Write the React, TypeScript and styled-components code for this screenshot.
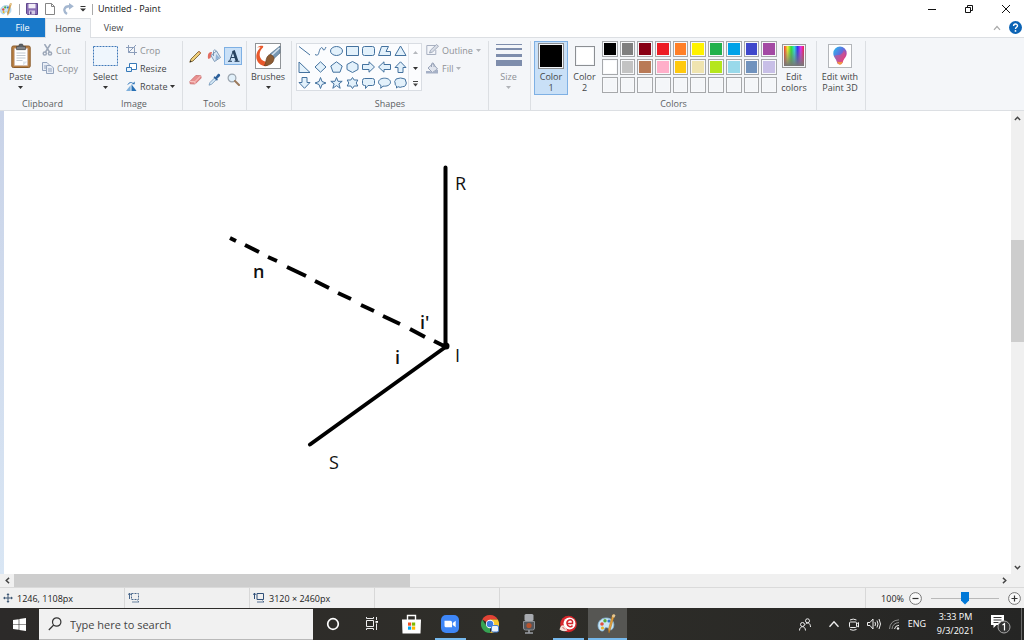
import React from "react";
import styled, { createGlobalStyle, css } from "styled-components";

const Global = createGlobalStyle`
  *, *::before, *::after { box-sizing: border-box; }
  body { margin: 0; background: #fff; }
  body, button, input { font-family: "Open Sans", "Liberation Sans", sans-serif; }
  button { padding: 0; border: 0; background: none; color: inherit; }
  svg { display: block; flex: none; }
`;

const ink = "#444648";
const muted = "#8d9095";
const line = "#dcdfe3";

const Desktop = styled.div`
  display: flex;
  flex-direction: column;
  min-height: 100vh;
  font-size: 9px;
  color: ${ink};
`;

/* Title bar */
const TitleBar = styled.header`
  display: flex;
  align-items: center;
  height: 18px;
  color: #111;
`;
const QuickAccess = styled.div`
  display: flex;
  align-items: center;
  gap: 6px;
`;
const IconButton = styled.button<{ $width?: number }>`
  display: flex;
  align-items: center;
  justify-content: center;
  width: ${(p) => p.$width ?? 12}px;
  height: 16px;
`;
const Divider = styled.span`
  width: 1px;
  height: 11px;
  background: #a9a9a9;
`;
const Title = styled.h1`
  margin: 0 0 0 5px;
  font-size: 9px;
  font-weight: 400;
  line-height: 18px;
`;
const WindowButtons = styled.div`
  display: flex;
  margin-left: auto;
`;
const WindowButton = styled.button`
  display: flex;
  align-items: center;
  justify-content: center;
  width: 37px;
  height: 17px;
`;

/* Tabs */
const TabRow = styled.nav`
  display: flex;
  align-items: stretch;
  height: 20px;
  border-bottom: 1px solid ${line};
`;
const Tab = styled.button<{ $kind?: "file" | "active" }>`
  width: 45px;
  font-size: 9px;
  ${(p) => p.$kind === "file" && css`
    background: #1979ca;
    color: #fff;
  `}
  ${(p) => p.$kind === "active" && css`
    height: 20px;
    width: 46px;
    background: #f4f6f9;
    border: 1px solid ${line};
    border-bottom: 0;
  `}
`;
const TabTools = styled.div`
  display: flex;
  align-items: center;
  gap: 6px;
  margin-left: auto;
  padding-right: 3px;
`;

/* Ribbon */
const Ribbon = styled.section`
  display: flex;
  padding-top: 3px;
  background: #f4f6f9;
  border-bottom: 1px solid ${line};
`;
const GroupBox = styled.div<{ $width: number }>`
  display: flex;
  flex-direction: column;
  gap: 3px;
  flex: none;
  width: ${(p) => p.$width}px;
  border-right: 1px solid ${line};
`;
const GroupBody = styled.div<{ $inset?: number }>`
  display: flex;
  height: 54px;
  padding-left: ${(p) => p.$inset ?? 0}px;
`;
const GroupName = styled.div`
  height: 12px;
  line-height: 12px;
  text-align: center;
  color: #5c5f63;
`;
const BigButton = styled.button<{ $width: number; $on?: boolean; $off?: boolean }>`
  display: flex;
  flex-direction: column;
  align-items: center;
  flex: none;
  width: ${(p) => p.$width}px;
  height: 54px;
  padding-top: 2px;
  font-size: 9px;
  line-height: 11px;
  color: ${(p) => (p.$off ? muted : ink)};
  ${(p) => p.$on && css`
    background: #c9e0f7;
    outline: 1px solid #7eb0e4;
    outline-offset: -1px;
  `}
`;
const BigIcon = styled.span`
  display: flex;
  align-items: center;
  justify-content: center;
  height: 26px;
  margin-bottom: 2px;
`;
const ArrowSlot = styled.span`
  display: flex;
  align-items: center;
  height: 10px;
`;
const Stack = styled.div`
  display: flex;
  flex-direction: column;
  margin-left: 1px;
`;
const SmallButton = styled.button<{ $off?: boolean }>`
  display: flex;
  align-items: center;
  gap: 3px;
  height: 18px;
  font-size: 9px;
  color: ${(p) => (p.$off ? muted : ink)};
`;
const ToolGrid = styled.div`
  display: grid;
  grid-template-columns: repeat(3, 18px);
  grid-auto-rows: 18px;
  gap: 5px 1px;
  padding: 6px 0 0 3px;
`;
const ToolButton = styled.button<{ $on?: boolean }>`
  display: flex;
  align-items: center;
  justify-content: center;
  ${(p) => p.$on && css`
    background: #c9e0f7;
    border: 1px solid #7eb0e4;
  `}
`;
const Gallery = styled.div`
  display: flex;
  width: 126px;
  height: 48px;
  margin: 2px 3px 0 4px;
  background: #fbfcfe;
  border: 1px solid #d9dde3;
`;
const ShapeGrid = styled.div`
  display: grid;
  grid-template-columns: repeat(7, 16px);
  grid-auto-rows: 16px;
  margin: -1px 0 0 -1px;
`;
const ShapeButton = styled.button`
  display: flex;
  align-items: center;
  justify-content: center;
`;
const GalleryScroll = styled.div`
  display: grid;
  flex: 1;
  grid-template-rows: repeat(3, 1fr);
  justify-items: center;
  border-left: 1px solid #e3e6eb;
`;
const Swatch = styled.span<{ $color: string; $size: number }>`
  width: ${(p) => p.$size}px;
  height: ${(p) => p.$size}px;
  background: ${(p) => p.$color};
  border: 1px solid #8c8f93;
  box-shadow: inset 0 0 0 1px #f4f6f9;
`;
const Palette = styled.div`
  display: grid;
  grid-template-columns: repeat(10, 1fr);
  grid-auto-rows: 16px;
  gap: 2px;
  width: 175px;
  margin-left: 1px;
`;
const PaletteCell = styled.button<{ $color: string }>`
  border: 1px solid #a6a8ab;
  background: ${(p) => p.$color};
  box-shadow: inset 0 0 0 1px #f8f9fb;
`;
const Rainbow = styled.span`
  width: 24px;
  height: 24px;
  padding: 1px;
  border: 1px solid #9a9a9a;
  background: linear-gradient(to bottom, transparent 10%, #777 100%) content-box,
    linear-gradient(to right, #e33 0, #ee3 18%, #3d3 36%, #3dd 52%, #33e 68%, #d3e 84%, #e24 100%) content-box;
`;

/* Work area */
const Work = styled.main`
  display: grid;
  flex: 1;
  grid-template-columns: 4px 1fr 13px;
  grid-template-rows: minmax(200px, 1fr) 13px;
`;
const Edge = styled.div`
  background: linear-gradient(#c9d3e8, #d9e6f4);
`;
const Canvas = styled.div`
  overflow: hidden;
  background: #fff;
  svg { width: 100%; height: 100%; }
`;
const ScrollBar = styled.div<{ $across?: boolean }>`
  display: flex;
  flex-direction: ${(p) => (p.$across ? "row" : "column")};
  align-items: stretch;
  grid-column: ${(p) => (p.$across ? "1 / 3" : "auto")};
  background: #f0f0f0;
`;
const ScrollArrow = styled.button`
  display: flex;
  align-items: center;
  justify-content: center;
  flex: 0 0 14px;
`;
const Track = styled.div<{ $across?: boolean }>`
  display: flex;
  flex: 1;
  flex-direction: ${(p) => (p.$across ? "row" : "column")};
`;
const Space = styled.div<{ $share: number }>`
  flex: ${(p) => p.$share} 1 0;
`;
const Thumb = styled(Space)`
  background: #cdcdcd;
`;
const Corner = styled.div`
  background: #f0f0f0;
`;

/* Status bar */
const StatusBar = styled.footer`
  display: flex;
  height: 21px;
  background: #f0f0f0;
  border-top: 1px solid #dadada;
  color: #222;
`;
const StatusCell = styled.div<{ $grow?: boolean }>`
  display: flex;
  align-items: center;
  gap: 4px;
  flex: ${(p) => (p.$grow ? "1" : "0 0 125px")};
  padding-left: 3px;
  border-right: 1px solid #d8d8d8;
`;
const Zoom = styled.div`
  display: flex;
  align-items: center;
  gap: 5px;
  padding: 0 3px 0 15px;
`;
const ZoomButton = styled.button`
  display: flex;
`;
const Slider = styled.input`
  appearance: none;
  width: 76px;
  height: 16px;
  margin: 0;
  padding: 0 4px;
  background: transparent;
  &::-webkit-slider-runnable-track {
    height: 1px;
    background: #b9b9b9;
  }
  &::-webkit-slider-thumb {
    appearance: none;
    width: 8px;
    height: 13px;
    margin-top: -6px;
    background: #0078d7;
    clip-path: polygon(0 0, 100% 0, 100% 70%, 50% 100%, 0 70%);
  }
`;

/* Taskbar */
const TaskBar = styled.footer`
  display: flex;
  height: 32px;
  background: linear-gradient(to right, #2c2a29, #2f2e29 50%, #252524);
  color: #fff;
`;
const Start = styled.button`
  display: flex;
  align-items: center;
  justify-content: center;
  width: 39px;
`;
const Search = styled.label`
  display: flex;
  align-items: center;
  gap: 8px;
  width: 274px;
  height: 31px;
  margin-top: 1px;
  padding-left: 9px;
  background: #f1f1f1;
  border-bottom: 1px solid #b9b9b9;
`;
const SearchInput = styled.input`
  flex: 1;
  min-width: 0;
  padding: 0;
  border: 0;
  outline: 0;
  background: transparent;
  font-size: 11px;
  color: #333;
  &::placeholder { color: #444; opacity: 1; }
`;
const Tasks = styled.nav`
  display: grid;
  grid-template-columns: repeat(8, 1fr);
  width: 314px;
`;
const Task = styled.button<{ $run?: boolean; $on?: boolean }>`
  display: flex;
  align-items: center;
  justify-content: center;
  background: ${(p) => (p.$on ? "#565653" : "transparent")};
  box-shadow: ${(p) => (p.$run || p.$on ? "inset 0 -2px #76b9ed" : "none")};
  margin: ${(p) => (p.$run ? "0 4px" : "0")};
`;
const Tray = styled.div`
  display: flex;
  align-items: center;
  margin-left: auto;
`;
const TrayButton = styled.button<{ $width?: number }>`
  display: flex;
  align-items: center;
  justify-content: center;
  width: ${(p) => p.$width ?? 20}px;
  height: 32px;
  font-size: 9px;
  line-height: 14px;
`;
const ShowDesktop = styled.button`
  width: 3px;
  height: 32px;
  border-left: 1px solid #6a6a6a;
`;

const Arrow = ({ color = "#333" }: { color?: string }) => (
  <svg width="5" height="3" viewBox="0 0 5 3"><path d="M0 0h5L2.500 3z" fill={color} /></svg>
);

const Chevron = ({ turn = 0, color = "#444", size = 7, weight = 1.6 }: { turn?: number; color?: string; size?: number; weight?: number }) => (
  <svg width={size} height={size} viewBox="0 0 8 8">
    <path d="M1 5.800 4 2.500 7 5.800" fill="none" stroke={color} strokeWidth={weight} transform={`rotate(${turn} 4 4)`} />
  </svg>
);

const PaintIcon = ({ size }: { size: number }) => (
  <svg width={size} height={size} viewBox="0 0 20 20">
    <path d="M10 4C5 3.500 1 7 1 11.500c0 4 3 6 5 5.500 2-.6.8-3 3-3.500 2.500-.5 3 3 5 2.500 2.400-.8 3.500-4.500 2.500-7.500C15.500 5.500 13 4.200 10 4z" fill="#c9e6f6" stroke="#7fb3d4" strokeWidth=".8" />
    <circle cx="5" cy="10" r="1.800" fill="#e2503b" />
    <circle cx="8" cy="6.800" r="1.700" fill="#5aa83a" />
    <circle cx="12" cy="7" r="1.600" fill="#3478c8" />
    <circle cx="5.500" cy="14" r="1.600" fill="#eab52a" />
    <path d="M17.500 1 13.500 15l-1.500 4-.6-3.700L15.500.8z" fill="#e3a13c" stroke="#a86f20" strokeWidth=".5" />
    <path d="M15.200 1.200 17 0l1.500 1.500-1.300 2.300-2-.8z" fill="#e5c894" />
  </svg>
);

const PasteIcon = () => (
  <svg width="20" height="26" viewBox="0 0 20 26">
    <rect x=".8" y="3" width="18.400" height="21.500" rx="1.500" fill="#b98145" stroke="#8a5b2a" />
    <path d="M3.500 5.500h13v17h-13z" fill="#fff" stroke="#cbb" strokeWidth=".5" />
    <path d="M12 22.500v-4h4.500" fill="#dde4ec" />
    <path d="M5.500 10h9M5.500 12.500h9M5.500 15h9M5.500 17.500h6" stroke="#b9c2cc" strokeWidth=".9" />
    <path d="M5.500 3.500h2L8.500 1h3l1 2.500h2v3.200h-9z" fill="#5c6166" stroke="#3f4347" strokeWidth=".5" />
    <path d="M6 5h8" stroke="#a4a9ae" />
  </svg>
);
const CutIcon = () => (
  <svg width="11" height="12" viewBox="0 0 11 12" fill="none" stroke="#9da8b9" strokeWidth="1.500">
    <path d="M2.500 0 7.500 8M8.500 0 3.500 8" /><circle cx="2.800" cy="9.500" r="1.600" /><circle cx="8" cy="9.500" r="1.600" />
  </svg>
);
const CopyIcon = () => (
  <svg width="12" height="12" viewBox="0 0 12 12" fill="#e9eef6" stroke="#93a3bd">
    <path d="M.5.5h4.500l2 2v6H.5z" /><path d="M4.500 3.500H9l2.500 2.500v5.500h-7z" /><path d="M6 7h4M6 9h4M2 4h2M2 6h2" />
  </svg>
);
const SelectIcon = () => (
  <svg width="25" height="20" viewBox="0 0 25 20"><rect x=".5" y=".5" width="24" height="19" fill="#eff6fd" stroke="#3f78b8" strokeDasharray="2 1" /></svg>
);
const CropIcon = () => (
  <svg width="11" height="10" viewBox="0 0 11 10" fill="none" stroke="#8b9dba">
    <path d="M2.500 0v7.500H11M0 2.500h8.500V10M2.500 7.500 10 0" />
  </svg>
);
const ResizeIcon = () => (
  <svg width="11" height="10" viewBox="0 0 11 10" fill="#fff" stroke="#3779b8">
    <path d="M3.500.5h7v6h-7z" /><path d="M.5 4.500h5v4h-5z" fill="#e8f3fc" />
  </svg>
);
const RotateIcon = () => (
  <svg width="11" height="11" viewBox="0 0 12 11">
    <path d="M0 10.500h5V4z" fill="#7fb0dc" /><path d="M6 10.500V3l5.500 7.500z" fill="#2770b5" />
    <path d="M2 3.500C3 1 6 .5 7.500 2" fill="none" stroke="#2770b5" /><path d="M6.500 3h3V0z" fill="#2770b5" />
  </svg>
);
const toolIcons: [string, React.ReactNode][] = [
  ["Pencil", <svg key="p" width="13" height="13" viewBox="0 0 13 13"><path d="M.8 12.200 2 9 10 1l2 2-8 8z" fill="#f0cf7a" stroke="#7b6438" strokeWidth=".9" /><path d="m.8 12.200.6-1.800 1.200 1.200z" fill="#222" /><path d="m9 2 2 2 1.200-1-2-2z" fill="#d6956b" /></svg>],
  ["Fill with color", <svg key="f" width="14" height="14" viewBox="0 0 14 14"><path d="M1 6c0-2 2-3.500 4-3l-1.500 6-2 1C.6 9 .8 7.500 1 6z" fill="#e16d62" /><path d="M4 6.500 9.500 2l4 6.500-6 4z" fill="#dce8f4" stroke="#6f8eb0" strokeWidth=".9" /><path d="M6.500 7V2.500C6.500.4 9 .4 9 2.500" fill="none" stroke="#6f8eb0" strokeWidth=".9" /><path d="m9 5 3.500 3.500-4 3z" fill="#92b3d6" /></svg>],
  ["Text", <svg key="t" width="13" height="12" viewBox="0 0 13 12"><path d="M6.200 1 2.700 11M4 7.500h5" fill="none" stroke="#26425f" strokeWidth="1" /><path d="M6.500.500 10 11" stroke="#26425f" strokeWidth="2.600" /><path d="M1 11.300h4M7.500 11.300H12.500" stroke="#26425f" /></svg>],
  ["Eraser", <svg key="e" width="13" height="13" viewBox="0 0 13 13"><path d="m.8 8.500 6-6 5 .2.400 2.300-6 6-5-.2z" fill="#e88f8f" stroke="#c46464" strokeWidth=".7" /><path d="m.8 8.500 5 .3 6-6.100M5.800 8.800l.4 2.200" fill="none" stroke="#fbd0cd" strokeWidth=".9" /></svg>],
  ["Color picker", <svg key="c" width="13" height="13" viewBox="0 0 13 13"><path d="M1 12.200 2 9.500 6.500 5l1.700 1.700L3.600 11.200z" fill="#d6e9f7" stroke="#6b90b5" strokeWidth=".8" /><path d="m5.500 4.200 1-1 1 .7L9.700 1.200C11 0 13 2 11.800 3.300L9.200 5.700l.7 1-1 1z" fill="#2d609a" /></svg>],
  ["Magnifier", <svg key="m" width="13" height="13" viewBox="0 0 13 13"><circle cx="5" cy="5" r="3.900" fill="#e1f0fa" stroke="#9aa4ae" strokeWidth="1.200" /><path d="m8 8 4 4" stroke="#9b7a5c" strokeWidth="2" strokeLinecap="round" /></svg>],
];
const BrushIcon = () => (
  <svg width="26" height="26" viewBox="0 0 26 26">
    <rect x=".5" y=".5" width="25" height="25" fill="#fff" stroke="#909498" />
    <path d="M2 4.500C5 2 9.500 2 8 4.500 4.500 7.500 4 12 5.500 15c1.500 3 5 4 8 3.500l-1 4.500C6 24 1.500 19 1.300 14 1.200 9.500 3.500 6.500 5.500 4.500 4.500 4 3 4.500 2 4.500z" fill="#e8582b" />
    <path d="M25 3v7l-6 5.500-4-4.500z" fill="#7898b4" stroke="#4a6680" strokeWidth=".6" />
    <path d="M24.500 5 16.500 12.500" stroke="#d5e2ee" strokeWidth="1.500" />
    <path d="M15 11.500c2.500.5 4 2 4 4.500-.5 4.500-5 7-10 6.500 2-1 1.500-3.500 2.200-6 .7-2.800 2-4.500 3.800-5z" fill="#8c5b33" stroke="#603a1c" strokeWidth=".6" />
  </svg>
);

const shapes: [string, string][] = [
  ["Line", "M1 1.500 12 10"],
  ["Curve", "M1 9.500c3.500 2 3.500-1 4.500-4s2.500-4 3.500-1.500 1.500 1 3-2"],
  ["Oval", "M.5 6a6 4.500 0 1 0 12 0 6 4.500 0 1 0-12 0z"],
  ["Rectangle", "M.5 1.500h12v9H.5z"],
  ["Rounded rectangle", "M2.500 1.500h8q2 0 2 2v5q0 2-2 2h-8q-2 0-2-2v-5q0-2 2-2z"],
  ["Polygon", "M3.500 1.500h7L8 6.500h4.500v4H.5z"],
  ["Triangle", "M6.500 1 12 10.500H1z"],
  ["Right triangle", "M1 1v10.500h11z"],
  ["Diamond", "M6.500.8 12 6l-5.500 5.200L1 6z"],
  ["Pentagon", "M6.500.8 12.200 5 10 11.200H3L.8 5z"],
  ["Hexagon", "M6.500.5 12 3.500v5l-5.500 3L1 8.500v-5z"],
  ["Right arrow", "M.5 3.500H7V.8L12.500 6 7 11.200V8.500H.5z"],
  ["Left arrow", "M12.500 3.500H6V.8L.5 6 6 11.200V8.500h6.500z"],
  ["Up arrow", "M4 11.500V6.500H1L6.500.8 12 6.500H9v5z"],
  ["Down arrow", "M4 .5v5H1l5.500 5.800L12 5.500H9v-5z"],
  ["Four-point star", "M6.500.5 8 4.500 12 6 8 7.500 6.500 11.500 5 7.500 1 6l4-1.500z"],
  ["Five-point star", "M6.500.5 8 4.300h4.200L8.900 6.900l1.300 4.400L6.500 8.600l-3.700 2.700 1.300-4.400L.8 4.300H5z"],
  ["Six-point star", "M6.500.5 8.200 3h3.600L10.200 6l1.600 3H8.200L6.500 11.500 4.800 9H1.200l1.600-3-1.600-3h3.600z"],
  ["Rounded callout", "M2.500 1.500h8q2 0 2 2v3q0 2-2 2H6l-2.500 3v-3h-1q-2 0-2-2v-3q0-2 2-2z"],
  ["Oval callout", "M6.500 1.200c3.500 0 6 1.700 6 4s-2.500 4-6 4H5L2.700 11.300 3 8.500C1.500 7.700.5 6.500.5 5.200c0-2.300 2.500-4 6-4z"],
  ["Cloud callout", "M4 1.500Q6.500.5 9 1.500q3 0 2.700 2.500 1.300 2 0 4-.7 2-3.200 1.700Q6 11 4 9.700L2.500 11V9Q.5 8 1.200 6 0 4.500 1.300 3.500 1.500 1.500 4 1.500z"],
];

const OutlineIcon = () => (
  <svg width="13" height="12" viewBox="0 0 13 12"><path d="M9 1.500H.8v9h9V6" fill="#f4f6fa" stroke="#a9b1c1" /><path d="m3.500 9 1-2.800L10.500.5 12.500 2.300 6.500 8z" fill="#d9dde6" stroke="#9ca6b8" strokeWidth=".9" /></svg>
);
const FillIcon = () => (
  <svg width="13" height="12" viewBox="0 0 13 12"><path d="m2 6 5-4.500L11.500 7 6.500 10.500z" fill="#e1e5ee" stroke="#98a3b8" /><path d="M5.500 5V2Q6.500-.5 8 2v3" fill="none" stroke="#98a3b8" /><path d="M0 9h4l2.500 1.500 4-2.500H12v3.500H0z" fill="#a5b0c6" /></svg>
);
const SizeIcon = () => (
  <svg width="26" height="26" viewBox="0 0 26 26" fill="#7e8dac"><path d="M0 1h26v1H0zM0 5h26v2H0zM0 11h26v3H0zM0 17h26v6H0z" /></svg>
);
const Paint3DIcon = () => (
  <svg width="24" height="24" viewBox="0 0 24 24">
    <defs>
      <linearGradient id="drop" x1="0" y1="0" x2="1" y2="1">
        <stop offset="0" stopColor="#25c3ee" /><stop offset=".45" stopColor="#5e6fe0" /><stop offset=".75" stopColor="#d63c8f" /><stop offset="1" stopColor="#f2703a" />
      </linearGradient>
    </defs>
    <rect x=".5" y=".5" width="23" height="23" fill="#fff" stroke="#b3b6ba" />
    <path d="M12 2.500a6.700 6.700 0 0 1 6.700 6.700c0 4-3 5-3.700 8.300-.4 3-5.300 4-6 .8-.4-3.500-3.700-5-3.700-9.100A6.700 6.700 0 0 1 12 2.500z" fill="url(#drop)" />
    <path d="M6 12c3-2 8 1 10-6 2 5 1 7-1 10-1.500 4-4.500 5-6 2.500C8.500 15.500 7 14 6 12z" fill="#ef4c77" opacity=".55" />
    <path d="M9.200 17.500q2.800 1.200 5.500 0c0 4-5 4.500-5.500 0z" fill="#f09545" />
  </svg>
);

const colors = [
  "#000000", "#7f7f7f", "#880015", "#ed1c24", "#ff7f27", "#fff200", "#22b14c", "#00a2e8", "#3f48cc", "#a349a4",
  "#ffffff", "#c3c3c3", "#b97a57", "#ffaec9", "#ffc90e", "#efe4b0", "#b5e61d", "#99d9ea", "#7092be", "#c8bfe7",
  ...Array(10).fill("#f4f6f9"),
];

const dashes = [
  [226, 127, 232, 130], [241, 134, 255, 141], [264, 146, 273, 150], [283, 156, 302, 165], [311, 170, 325, 177],
  [334, 182, 347, 188], [357, 194, 370, 200], [379, 205, 396, 213], [406, 218, 421, 226], [430, 230, 442, 236],
];
/* text, x, baseline, weight */
const labels: [string, number, number, number][] = [
  ["R", 451, 79, 400], ["n", 249, 167, 600], ["i'", 416, 218, 600], ["i", 391, 253, 600], ["I", 451, 251, 400], ["S", 325, 358, 400],
];

function Group({ width, name, inset, children }: { width: number; name?: string; inset?: number; children: React.ReactNode }) {
  return (
    <GroupBox $width={width}>
      <GroupBody $inset={inset}>{children}</GroupBody>
      <GroupName>{name}</GroupName>
    </GroupBox>
  );
}

export default function App() {
  return (
    <Desktop>
      <Global />
      <TitleBar>
        <QuickAccess>
          <PaintIcon size={13} />
          <Divider />
          <IconButton aria-label="Save">
            <svg width="12" height="12" viewBox="0 0 12 12"><path d="M.5.5h11v11h-10l-1-1z" fill="#8a6fb5" stroke="#60478d" /><path d="M2.500.8h7v4.500h-7z" fill="#f2eef8" /><path d="M3 7.500h6v4H3z" fill="#d5cbe4" /><path d="M4 8.500h1.500v2.500H4z" fill="#60478d" /></svg>
          </IconButton>
          <IconButton aria-label="New">
            <svg width="10" height="12" viewBox="0 0 10 12"><path d="M.5.500H6.500l3 3v8h-9z" fill="#fff" stroke="#858585" /><path d="M6.500.5v3h3" fill="none" stroke="#858585" /></svg>
          </IconButton>
          <IconButton aria-label="Redo">
            <svg width="11" height="12" viewBox="0 0 11 12"><path d="M4 11C-.5 8 1 2.800 7 3.300" fill="none" stroke="#a4b7d0" strokeWidth="2.300" /><path d="M6 0v6.800L10.800 3.300z" fill="#a4b7d0" /></svg>
          </IconButton>
        </QuickAccess>
        <IconButton $width={18} aria-label="Customize Quick Access Toolbar">
          <svg width="6" height="6" viewBox="0 0 6 6"><path d="M.5 0h5v1h-5zM0 2.500h6l-3 3z" fill="#333" /></svg>
        </IconButton>
        <Divider />
        <Title>Untitled - Paint</Title>
        <WindowButtons>
          <WindowButton aria-label="Minimize"><svg width="8" height="8" viewBox="0 0 8 8"><path d="M0 4.500h8" stroke="#111" /></svg></WindowButton>
          <WindowButton aria-label="Restore"><svg width="8" height="8" viewBox="0 0 8 8"><path d="M.5 2.500h5v5h-5zM2.500 2.500v-2h5v5h-2" fill="none" stroke="#111" /></svg></WindowButton>
          <WindowButton aria-label="Close"><svg width="8" height="8" viewBox="0 0 8 8"><path d="m0 0 8 8M8 0 0 8" stroke="#111" /></svg></WindowButton>
        </WindowButtons>
      </TitleBar>

      <TabRow>
        <Tab $kind="file">File</Tab>
        <Tab $kind="active">Home</Tab>
        <Tab>View</Tab>
        <TabTools>
          <IconButton aria-label="Collapse the ribbon"><Chevron color="#aaa" size={8} weight={1.2} /></IconButton>
          <IconButton aria-label="Help">
            <svg width="13" height="13" viewBox="0 0 13 13"><circle cx="6.500" cy="6.500" r="6.500" fill="#0c64b5" /><path d="M4.600 5c0-2.600 3.900-2.500 3.900-.2 0 1.500-2 1.500-2 3.200" fill="none" stroke="#fff" strokeWidth="1.400" /><circle cx="6.500" cy="9.900" r=".9" fill="#fff" /></svg>
          </IconButton>
        </TabTools>
      </TabRow>

      <Ribbon>
        <Group width={86} name="Clipboard">
          <BigButton $width={41}><BigIcon><PasteIcon /></BigIcon>Paste<ArrowSlot><Arrow /></ArrowSlot></BigButton>
          <Stack>
            <SmallButton $off><CutIcon />Cut</SmallButton>
            <SmallButton $off><CopyIcon />Copy</SmallButton>
          </Stack>
        </Group>
        <Group width={97} name="Image">
          <BigButton $width={39}><BigIcon><SelectIcon /></BigIcon>Select<ArrowSlot><Arrow /></ArrowSlot></BigButton>
          <Stack>
            <SmallButton $off><CropIcon />Crop</SmallButton>
            <SmallButton><ResizeIcon />Resize</SmallButton>
            <SmallButton><RotateIcon />Rotate<Arrow /></SmallButton>
          </Stack>
        </Group>
        <Group width={64} name="Tools">
          <ToolGrid>
            {toolIcons.map(([name, icon]) => <ToolButton key={name} aria-label={name} $on={name === "Text"}>{icon}</ToolButton>)}
          </ToolGrid>
        </Group>
        <Group width={45}>
          <BigButton $width={42}><BigIcon><BrushIcon /></BigIcon>Brushes<ArrowSlot><Arrow /></ArrowSlot></BigButton>
        </Group>
        <Group width={197} name="Shapes">
          <Gallery>
            <ShapeGrid>
              {shapes.map(([name, d], i) => (
                <ShapeButton key={name} aria-label={name}>
                  <svg width="13" height="12" viewBox="0 0 13 12"><path d={d} fill={i < 2 ? "none" : "#e3f1fb"} stroke="#44729f" /></svg>
                </ShapeButton>
              ))}
            </ShapeGrid>
            <GalleryScroll>
              <IconButton aria-label="Scroll shapes up"><svg width="5" height="3" viewBox="0 0 5 3"><path d="M0 3h5L2.500 0z" fill="#b5b8bd" /></svg></IconButton>
              <IconButton aria-label="Scroll shapes down"><Arrow /></IconButton>
              <IconButton aria-label="More shapes"><svg width="5" height="6" viewBox="0 0 5 6"><path d="M0 0h5v1H0zM0 2.500h5L2.500 5.500z" fill="#444" /></svg></IconButton>
            </GalleryScroll>
          </Gallery>
          <Stack>
            <SmallButton $off><OutlineIcon />Outline<Arrow color="#b0b3b8" /></SmallButton>
            <SmallButton $off><FillIcon />Fill<Arrow color="#b0b3b8" /></SmallButton>
          </Stack>
        </Group>
        <Group width={42}>
          <BigButton $width={39} $off><BigIcon><SizeIcon /></BigIcon>Size<ArrowSlot><Arrow color="#b0b3b8" /></ArrowSlot></BigButton>
        </Group>
        <Group width={286} name="Colors" inset={3}>
          <BigButton $width={34} $on><BigIcon><Swatch $color="#000" $size={26} /></BigIcon>Color<br />1</BigButton>
          <BigButton $width={33}><BigIcon><Swatch $color="#fff" $size={20} /></BigIcon>Color<br />2</BigButton>
          <Palette>
            {colors.map((c, i) => <PaletteCell key={i} $color={c} aria-label={i < 20 ? `Color ${c}` : `Custom color ${i - 19}`} />)}
          </Palette>
          <BigButton $width={34}><BigIcon><Rainbow /></BigIcon>Edit<br />colors</BigButton>
        </Group>
        <Group width={49}>
          <BigButton $width={46}><BigIcon><Paint3DIcon /></BigIcon>Edit with<br />Paint 3D</BigButton>
        </Group>
      </Ribbon>

      <Work>
        <Edge />
        <Canvas>
          <svg role="img" aria-label="Ray diagram">
            <g stroke="#000" strokeWidth="4" strokeLinecap="round" fill="none">
              <path d="M441.500 56.500V235M306 333.500 441.500 236" />
              <path d={dashes.map(([a, b, c, d]) => `M${a} ${b}L${c} ${d}`).join("")} strokeLinecap="butt" />
            </g>
            <circle cx="442" cy="235" r="3.500" />
            <g fontSize="18" fill="#111">
              {labels.map(([t, x, y, w]) => <text key={t} x={x} y={y} fontWeight={w}>{t}</text>)}
            </g>
          </svg>
        </Canvas>
        <ScrollBar>
          <ScrollArrow aria-label="Scroll up"><Chevron /></ScrollArrow>
          <Track><Space $share={115} /><Thumb $share={102} /><Space $share={218} /></Track>
          <ScrollArrow aria-label="Scroll down"><Chevron turn={180} /></ScrollArrow>
        </ScrollBar>
        <ScrollBar $across>
          <ScrollArrow aria-label="Scroll left"><Chevron turn={-90} /></ScrollArrow>
          <Track $across><Thumb $share={396} /><Space $share={587} /></Track>
          <ScrollArrow aria-label="Scroll right"><Chevron turn={90} /></ScrollArrow>
        </ScrollBar>
        <Corner />
      </Work>

      <StatusBar>
        <StatusCell>
          <svg width="10" height="10" viewBox="0 0 10 10"><path d="M5 1v8M1 5h8" stroke="#3b5573" /><path d="M5 0 6.500 2h-3zM5 10 3.500 8h3zM0 5l2-1.500v3zM10 5 8 3.500v3z" fill="#3b5573" /></svg>
          1246, 1108px
        </StatusCell>
        <StatusCell>
          <svg width="12" height="10" viewBox="0 0 12 10" fill="none" stroke="#4a688c"><path d="M1.500 0v6" /><path d="M3.500.5h7v6h-7z" strokeDasharray="2 1" /><path d="M4 9h7M0 2l1.500-2L3 2M9.500 7.500 11 9" strokeWidth=".8" /></svg>
        </StatusCell>
        <StatusCell>
          <svg width="12" height="10" viewBox="0 0 12 10" fill="none" stroke="#2f4f78"><path d="M1.500 0v6" /><path d="M4 .5h6.500v6H4z" /><path d="M4 9h7M0 2l1.500-2L3 2M9.500 7.500 11 9" strokeWidth=".8" /></svg>
          3120 × 2460px
        </StatusCell>
        <StatusCell />
        <StatusCell $grow />
        <Zoom>
          100%
          <ZoomButton aria-label="Zoom out"><svg width="13" height="13" viewBox="0 0 13 13"><circle cx="6.500" cy="6.500" r="5.900" fill="#fafafa" stroke="#777" /><path d="M3.500 6.500h6" stroke="#333" strokeWidth="1.200" /></svg></ZoomButton>
          <Slider type="range" aria-label="Zoom" min={0} max={100} defaultValue={50} />
          <ZoomButton aria-label="Zoom in"><svg width="13" height="13" viewBox="0 0 13 13"><circle cx="6.500" cy="6.500" r="5.900" fill="#fafafa" stroke="#777" /><path d="M3.500 6.500h6M6.500 3.500v6" stroke="#333" strokeWidth="1.200" /></svg></ZoomButton>
        </Zoom>
      </StatusBar>

      <TaskBar>
        <Start aria-label="Start">
          <svg width="13" height="13" viewBox="0 0 13 13" fill="#fff"><path d="M0 2 5.700 1.200v5H0zM6.300 1.100 13 0v6.200H6.300zM0 6.800h5.700v5L0 11zM6.300 6.800H13V13l-6.700-1z" /></svg>
        </Start>
        <Search>
          <svg width="14" height="14" viewBox="0 0 14 14" fill="none" stroke="#333" strokeWidth="1.200"><circle cx="8.700" cy="5" r="4.200" /><path d="M5.700 8 .8 13" /></svg>
          <SearchInput type="text" aria-label="Type here to search" placeholder="Type here to search" />
        </Search>
        <Tasks>
          <Task aria-label="Cortana"><svg width="14" height="14" viewBox="0 0 14 14"><circle cx="7" cy="7" r="5.300" fill="none" stroke="#fff" strokeWidth="1.700" /></svg></Task>
          <Task aria-label="Task View"><svg width="14" height="14" viewBox="0 0 14 14" fill="none" stroke="#eee"><path d="M1.500 3.500h7v6h-7zM1.500 0v1.500h7V0M1.500 13v-1.500h7V13M11.500 0v3M11.500 6.500V13" /><path d="M10.500 4h2.500v1.800h-2.500z" fill="#fff" stroke="none" /></svg></Task>
          <Task aria-label="Microsoft Store"><svg width="19" height="20" viewBox="0 0 19 20"><path d="M5.500 6V1.500h8V6" fill="none" stroke="#fff" strokeWidth="1.400" /><path d="M0 5.500h19L18.500 19.500H.5z" fill="#fff" /><path d="M6 8.500h3.200v3.200H6z" fill="#f25022" /><path d="M10 8.500h3.200v3.200H10z" fill="#7fba00" /><path d="M6 12.500h3.200v3.200H6z" fill="#00a4ef" /><path d="M10 12.500h3.200v3.200H10z" fill="#ffb900" /></svg></Task>
          <Task $run aria-label="Zoom"><svg width="18" height="18" viewBox="0 0 18 18"><rect width="18" height="18" rx="5" fill="#3e86f6" /><path d="M3.500 5.800h6q1.500 0 1.500 1.500v4.900H5q-1.500 0-1.500-1.500zM11.700 8l3-2.200v6.400l-3-2.200z" fill="#fff" /></svg></Task>
          <Task aria-label="Google Chrome"><svg width="18" height="18" viewBox="0 0 18 18"><path d="M9 9 1.200 4.500A9 9 0 0 1 16.800 4.500L9 4.800z" fill="#e24335" /><path d="M9 9v9A9 9 0 0 1 1.200 4.500L5.400 11z" fill="#36a353" /><path d="M9 9 9 4.500h7.800A9 9 0 0 1 9 18l4-7z" fill="#f8c630" /><circle cx="9" cy="9" r="4.200" fill="#fff" /><circle cx="9" cy="9" r="3.300" fill="#3f7de0" /><rect x="10.500" y="10.500" width="7" height="6.500" rx="1.500" fill="#edf3fb" stroke="#427ed3" /></svg></Task>
          <Task aria-label="Voice Recorder"><svg width="14" height="20" viewBox="0 0 14 20"><rect x="2.500" y="0" width="9" height="7" rx="1.500" fill="#a8abb0" /><path d="M1.500 7.500h11V14q0 2-2 2h-7q-2 0-2-2z" fill="#55585d" stroke="#8b8f94" /><circle cx="7" cy="11.500" r="2.600" fill="#b7532d" /><path d="M7 16v3M3 19h8" stroke="#999da3" strokeWidth="1.600" /></svg></Task>
          <Task $run aria-label="Screen recorder"><svg width="18" height="18" viewBox="0 0 18 18"><circle cx="9.500" cy="9" r="8.300" fill="#d7262b" /><circle cx="10.500" cy="8.500" r="6" fill="#fff" /><path d="M13.500 6C11 3.500 7.500 5.500 8 8.700c.5 3.300 4 3.800 5.500 1.800M8 8.500h5.500V6" fill="none" stroke="#d7262b" strokeWidth="1.500" /><path d="M.5 14.500Q2 9 5 10.500l3.500 5q-4.500 2-8-1z" fill="#f5dfd8" /><path d="m3.500 12 2.500 2.500" stroke="#d7262b" strokeWidth=".8" /></svg></Task>
          <Task $on aria-label="Paint"><PaintIcon size={20} /></Task>
        </Tasks>
        <Tray>
          <TrayButton $width={38} aria-label="People"><svg width="12" height="13" viewBox="0 0 12 13" fill="none" stroke="#eee"><circle cx="3.500" cy="6.500" r="2" /><path d="M.5 12.500c0-5 6-5 6 0" /><circle cx="8.500" cy="2.800" r="2" /><path d="M6.500 6.300C8.500 3.800 11.500 5 11.500 9" /></svg></TrayButton>
          <TrayButton aria-label="Show hidden icons"><Chevron color="#eee" size={12} weight={0.9} /></TrayButton>
          <TrayButton aria-label="Meet Now"><svg width="12" height="13" viewBox="0 0 12 13" fill="none" stroke="#eee"><path d="M2.500 4h5q1 0 1 1v3.500q0 1-1 1h-5q-1 0-1-1V5q0-1 1-1zM8.500 6l2-1.500v4.500L8.500 7.500M2 2q3.200-1.800 6.500 0M2 11.500q3.200 1.500 6.500 0" /></svg></TrayButton>
          <TrayButton aria-label="Volume"><svg width="14" height="12" viewBox="0 0 14 12" fill="none" stroke="#eee"><path d="M.5 4.500H3L6 1v10L3 7.500H.5zM8 4q1 2 0 4M10 2.500q2 3.500 0 7M12 1q3 5 0 10" /></svg></TrayButton>
          <TrayButton aria-label="Network"><svg width="11" height="11" viewBox="0 0 11 11" fill="none" stroke="#8e8e8e"><path d="M.5 10Q1 1.500 10 .8M3 10Q3.500 4 10 3.500" /><path d="M5.500 10Q6 6.500 10 6.300" stroke="#eee" /><circle cx="9" cy="9.500" r="1.200" fill="#eee" stroke="none" /></svg></TrayButton>
          <TrayButton $width={26}>ENG</TrayButton>
          <TrayButton $width={51}><span>3:33 PM<br />9/3/2021</span></TrayButton>
          <TrayButton $width={40} aria-label="Notifications"><svg width="20" height="20" viewBox="0 0 20 20"><path d="M0 1h13v10H5.500L2.500 14v-3H0z" fill="#fff" /><path d="M2.500 3.500h8M2.500 6h8M2.500 8.500h5" stroke="#333" /><circle cx="13" cy="13" r="6" fill="#333" stroke="#aaa" /><path d="m11.500 11 2-1.300V16.500" fill="none" stroke="#fff" strokeWidth="1.200" /></svg></TrayButton>
          <ShowDesktop aria-label="Show desktop" />
        </Tray>
      </TaskBar>
    </Desktop>
  );
}
